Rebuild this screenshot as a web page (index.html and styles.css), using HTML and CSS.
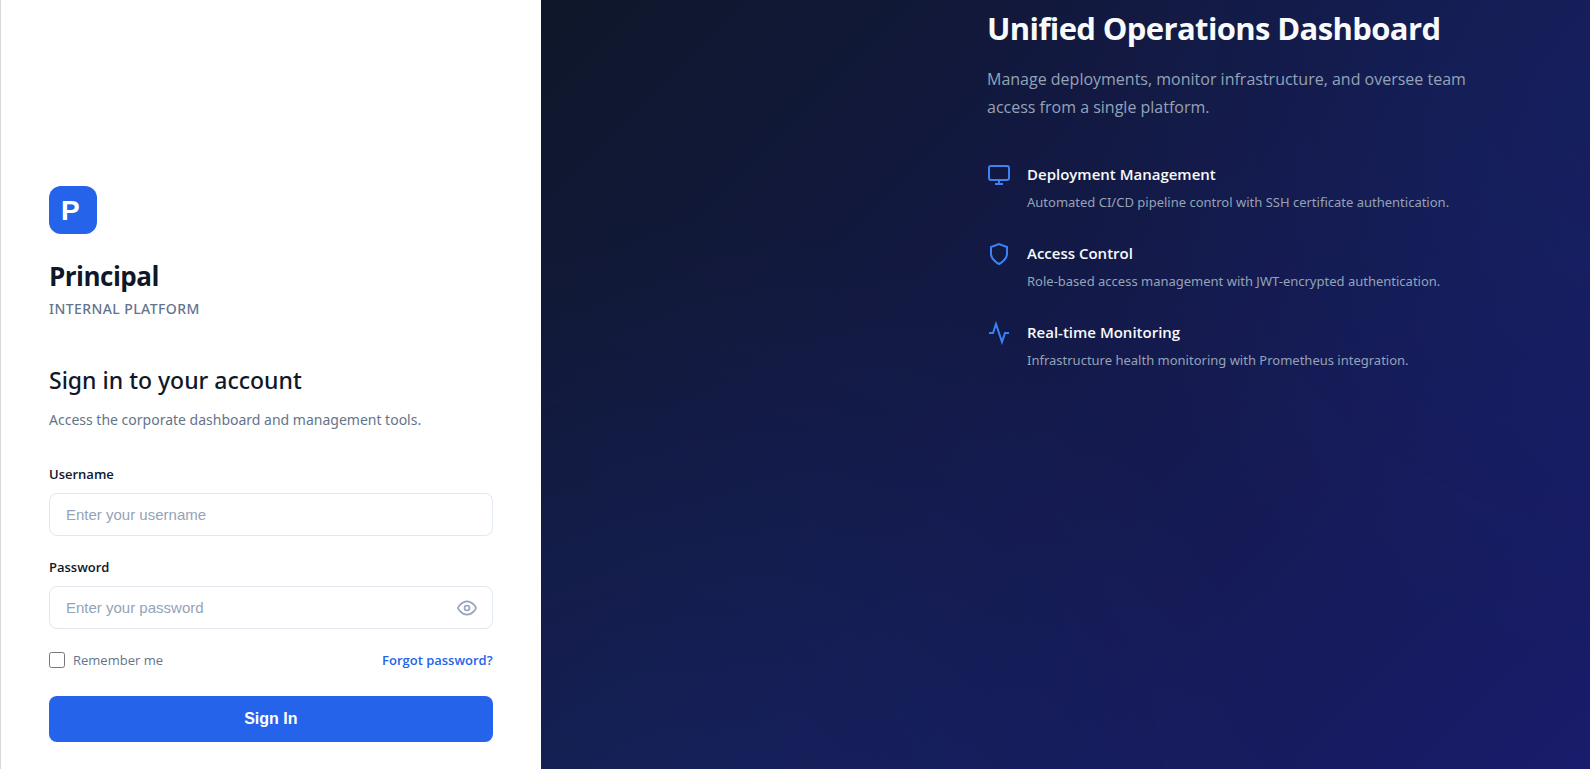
FILE: index.html
```html
<!DOCTYPE html>
<html lang="en">
<head>
<meta charset="utf-8">
<meta name="viewport" content="width=device-width, initial-scale=1">
<title>Principal – Sign in</title>
<link rel="stylesheet" href="styles.css">
</head>
<body>
<div class="layout">
  <main class="login">
    <header class="brand">
      <svg class="brand-logo" viewBox="0 0 48 48" aria-hidden="true">
        <rect width="48" height="48" rx="12" fill="#2563eb"/>
        <text class="brand-letter" x="12" y="34">P</text>
      </svg>
      <h1 class="brand-name">Principal</h1>
      <p class="brand-tag">INTERNAL PLATFORM</p>
    </header>
    <h2 class="login-title">Sign in to your account</h2>
    <p class="login-text">Access the corporate dashboard and management tools.</p>
    <form class="form">
      <div class="field">
        <label class="label" for="username">Username</label>
        <input class="input" id="username" type="text" placeholder="Enter your username">
      </div>
      <div class="field">
        <label class="label" for="password">Password</label>
        <div class="password">
          <input class="input" id="password" type="password" placeholder="Enter your password">
          <button class="toggle" type="button" aria-label="Show password">
            <svg width="20" height="20" viewBox="0 0 24 24" fill="none" stroke="currentColor" stroke-width="2" stroke-linecap="round" stroke-linejoin="round"><path d="M1 12s4-8 11-8 11 8 11 8-4 8-11 8-11-8-11-8z"/><circle cx="12" cy="12" r="3"/></svg>
          </button>
        </div>
      </div>
      <div class="options">
        <label class="remember"><input class="checkbox" type="checkbox">Remember me</label>
        <a class="forgot" href="#">Forgot password?</a>
      </div>
      <button class="submit" type="submit">Sign In</button>
    </form>
  </main>
  <aside class="showcase">
    <div class="showcase-content">
      <h2 class="showcase-title">Unified Operations Dashboard</h2>
      <p class="showcase-text">Manage deployments, monitor infrastructure, and oversee team access from a single platform.</p>
      <ul class="features">
        <li class="feature">
          <svg class="feature-icon" viewBox="0 0 24 24"><rect x="2" y="3" width="20" height="14" rx="2"/><path d="M8 21h8M12 17v4"/></svg>
          <div>
            <h3 class="feature-title">Deployment Management</h3>
            <p class="feature-text">Automated CI/CD pipeline control with SSH certificate authentication.</p>
          </div>
        </li>
        <li class="feature">
          <svg class="feature-icon" viewBox="0 0 24 24"><path d="M12 22s8-4 8-10V5l-8-3-8 3v7c0 6 8 10 8 10z"/></svg>
          <div>
            <h3 class="feature-title">Access Control</h3>
            <p class="feature-text">Role-based access management with JWT-encrypted authentication.</p>
          </div>
        </li>
        <li class="feature">
          <svg class="feature-icon" viewBox="0 0 24 24"><path d="M22 12h-4l-3 9L9 3l-3 9H2"/></svg>
          <div>
            <h3 class="feature-title">Real-time Monitoring</h3>
            <p class="feature-text">Infrastructure health monitoring with Prometheus integration.</p>
          </div>
        </li>
      </ul>
    </div>
  </aside>
</div>
</body>
</html>
```
FILE: styles.css
```css
* { box-sizing: border-box; }
body, h1, h2, h3, p, ul { margin: 0; padding: 0; }
body {
  font-family: "Open Sans", "Noto Sans", sans-serif;
  color: #0f172a;
  background: #fff;
}
.layout {
  display: grid;
  grid-template-columns: 34% 1fr;
  min-height: 100vh;
}
.login {
  display: flex;
  flex-direction: column;
  justify-content: flex-end;
  padding: 27px 48px;
  border-left: 1px solid #d9d9d9;
  background: #fff;
}
.brand-logo { display: block; width: 48px; height: 48px; }
.brand-letter { font: bold 28px "Liberation Sans", Arial, sans-serif; fill: #fff; }
.brand-name {
  margin-top: 24px;
  font-size: 26px;
  line-height: 36px;
  font-weight: 700;
  letter-spacing: -0.02em;
}
.brand-tag {
  margin-top: 5px;
  font-family: "Noto Sans", "Open Sans", sans-serif;
  font-size: 14px;
  line-height: 20px;
  font-weight: 500;
  letter-spacing: 0.03em;
  color: #64748b;
}
.login-title {
  margin-top: 43px;
  font-family: "Noto Sans", "Open Sans", sans-serif;
  font-size: 23px;
  line-height: 36px;
  font-weight: 500;
}
.login-text {
  margin-top: 10px;
  font-family: "Noto Sans", "Open Sans", sans-serif;
  font-size: 14px;
  line-height: 24px;
  color: #64748b;
}
.form { display: flex; flex-direction: column; margin-top: 31px; }
.field { display: flex; flex-direction: column; gap: 8px; margin-bottom: 20px; }
.label { font-size: 13px; line-height: 22px; font-weight: 600; }
.input {
  width: 100%;
  height: 43px;
  padding: 0 16px;
  border: 1px solid #e2e8f0;
  border-radius: 8px;
  background: #fff;
  color: #0f172a;
  font: 15px "Liberation Sans", Arial, sans-serif;
}
.input::placeholder { color: #94a3b8; }
.password { position: relative; }
.password .input { padding-right: 48px; }
.toggle {
  position: absolute;
  top: 0;
  bottom: 0;
  right: 12px;
  display: flex;
  align-items: center;
  padding: 4px;
  border: 0;
  background: none;
  color: #94a3b8;
}
.options {
  display: flex;
  align-items: center;
  justify-content: space-between;
  margin-bottom: 25px;
  font-size: 13px;
  line-height: 22px;
}
.remember { display: flex; align-items: center; gap: 8px; color: #64748b; }
.checkbox { width: 16px; height: 16px; margin: 0; }
.forgot { color: #2563eb; font-weight: 600; text-decoration: none; }
.submit {
  height: 46px;
  border: 0;
  border-radius: 8px;
  background: #2563eb;
  color: #fff;
  font: bold 16px "Liberation Sans", Arial, sans-serif;
}
.showcase {
  display: flex;
  justify-content: flex-end;
  padding: 6px 123px 48px 48px;
  background:
    radial-gradient(circle at 10% 110%, rgba(37, 99, 235, 0.1), transparent 50%),
    radial-gradient(circle at 105% 10%, rgba(37, 99, 235, 0.08), transparent 45%),
    linear-gradient(135deg, #0f172a, #181c6b);
}
.showcase-content { width: 100%; max-width: 480px; }
.showcase-title {
  font-size: 31px;
  line-height: 44px;
  font-weight: 700;
  color: #f8fafc;
  white-space: nowrap;
  letter-spacing: -0.02em;
}
.showcase-text {
  margin-top: 15px;
  font-size: 16px;
  line-height: 28px;
  color: #94a3b8;
}
.features { display: flex; flex-direction: column; gap: 27px; margin-top: 40px; list-style: none; }
.feature { display: flex; gap: 16px; }
.feature-icon {
  flex: none;
  width: 24px;
  height: 24px;
  margin-top: 2px;
  fill: none;
  stroke: #3b82f6;
  stroke-width: 2;
}
.feature-title { font-size: 15px; line-height: 26px; font-weight: 600; color: #f8fafc; }
.feature-text {
  margin-top: 4px;
  font-family: "Noto Sans", "Open Sans", sans-serif;
  font-size: 13px;
  line-height: 22px;
  color: #94a3b8;
  white-space: nowrap;
}
```
